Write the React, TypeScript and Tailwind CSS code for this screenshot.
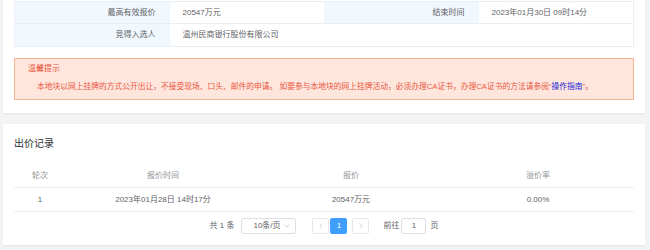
import React from 'react';

const font = { fontFamily: '"Liberation Sans", "Noto Sans CJK SC", sans-serif' };

export default function App() {
  return (
    <div className="min-h-[250px] w-[650px] bg-[#f2f3f5] pl-[3px] pr-[5px] text-[8px] text-[#606266]" style={font}>
      {/* top card: result + notice */}
      <div className="bg-white px-[11px] pt-[1px] pb-[13px] shadow-[0_1px_2px_rgba(0,0,0,0.06)]">
        <div className="border border-[#ebeef5]">
          <div className="grid h-[22px] grid-cols-4 items-stretch border-b border-[#ebeef5]">
            <div className="flex items-center justify-end bg-[#f0f7fd] pr-[14px]">最高有效报价</div>
            <div className="flex items-center pl-[13px]">20547万元</div>
            <div className="flex items-center justify-end bg-[#f0f7fd] pr-[14px]">结束时间</div>
            <div className="flex items-center pl-[13px]">2023年01月30日 09时14分</div>
          </div>
          <div className="grid h-[22px] grid-cols-4 items-stretch">
            <div className="flex items-center justify-end bg-[#f0f7fd] pr-[14px]">竞得入选人</div>
            <div className="col-span-3 flex items-center pl-[13px]">温州民商银行股份有限公司</div>
          </div>
        </div>

        <div className="mt-[11px] h-[42px] border border-[#f9b48f] bg-[#fee6dd] pt-[5px] pl-[13px] text-[#e9573f]">
          <div className="leading-[10px]">温馨提示</div>
          <div className="mt-[8px] pl-[9px] text-[7.75px] leading-[10px]">
            本地块以网上挂牌的方式公开出让，不接受现场、口头、邮件的申请。 如要参与本地块的网上挂牌活动，必须办理CA证书，办理CA证书的方法请参阅“
            <span className="text-[#2323d8]">操作指南</span>”。
          </div>
        </div>
      </div>

      {/* bid records */}
      <div className="mt-[11px] bg-white px-[11px] pt-[14px] pb-[11px] shadow-[0_1px_2px_rgba(0,0,0,0.06)]">
        <div className="text-[10px] leading-[12px] text-[#303133]">出价记录</div>

        <div className="mt-[14px]">
          <div className="grid h-[24px] grid-cols-[52px_194px_182px_1fr] items-center border-b border-[#ebeef5] text-center text-[#909399]">
            <div>轮次</div>
            <div>报价时间</div>
            <div>报价</div>
            <div>溢价率</div>
          </div>
          <div className="grid h-[24px] grid-cols-[52px_194px_182px_1fr] items-center border-b border-[#ebeef5] text-center">
            <div>1</div>
            <div>2023年01月28日 14时17分</div>
            <div>20547万元</div>
            <div>0.00%</div>
          </div>
        </div>

        <div className="mt-[6px] flex h-[16px] items-center justify-center">
          <span className="mr-[7px]">共 1 条</span>
          <div className="flex h-[16px] w-[55px] items-center justify-between rounded-[2px] border border-[#dcdfe6] pl-[11px] pr-[5px]">
            <span>10条/页</span>
            <svg width="6" height="4" viewBox="0 0 6 4" fill="none" stroke="#c0c4cc" strokeWidth="0.8">
              <path d="M0.5 0.8 L3 3.2 L5.5 0.8" />
            </svg>
          </div>
          <div className="ml-[16px] flex h-[16px] w-[17px] items-center justify-center rounded-[2px] border border-[#e4e7ed] bg-white">
            <svg width="4" height="6" viewBox="0 0 4 6" fill="none" stroke="#c0c4cc" strokeWidth="0.8">
              <path d="M3.2 0.5 L0.8 3 L3.2 5.5" />
            </svg>
          </div>
          <div className="ml-[1px] flex h-[16px] w-[17px] items-center justify-center rounded-[2px] bg-[#409eff] text-white">1</div>
          <div className="ml-[5px] flex h-[16px] w-[17px] items-center justify-center rounded-[2px] border border-[#e4e7ed] bg-white">
            <svg width="4" height="6" viewBox="0 0 4 6" fill="none" stroke="#c0c4cc" strokeWidth="0.8">
              <path d="M0.8 0.5 L3.2 3 L0.8 5.5" />
            </svg>
          </div>
          <span className="ml-[14px]">前往</span>
          <div className="ml-[2px] flex h-[16px] w-[25px] items-center justify-center rounded-[2px] border border-[#dcdfe6]">1</div>
          <span className="ml-[4px]">页</span>
        </div>
      </div>
    </div>
  );
}
